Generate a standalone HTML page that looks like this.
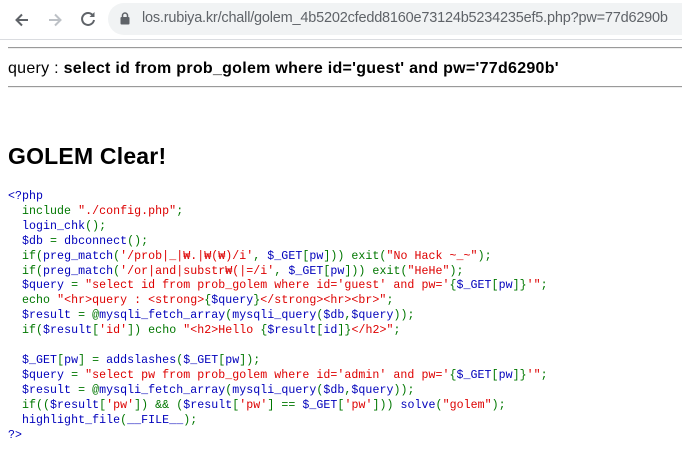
<!DOCTYPE html>
<html><head><meta charset="utf-8"><style>
*{margin:0;padding:0;box-sizing:border-box}
body{width:682px;height:457px;overflow:hidden;background:#fff;font-family:"Liberation Sans","Noto Sans CJK KR",sans-serif;position:relative}
.bar{position:absolute;left:0;top:0;width:682px;height:40px;background:#fff;border-bottom:1px solid #dadce0}
.pill{position:absolute;left:108px;top:3px;width:590px;height:32px;border-radius:16px;background:#f1f3f4}
.url{position:absolute;left:142px;top:10px;font-size:14.5px;color:#5f6368;letter-spacing:-0.2px;white-space:nowrap}
.hr{position:absolute;left:8px;width:674px;height:2px;border-top:1px solid #9a9a9a;border-bottom:1px solid #eee}
.q{position:absolute;left:8px;top:60px;font-size:16px;color:#000;white-space:nowrap;letter-spacing:0.28px}
h2{position:absolute;left:8px;top:143px;font-size:23px;font-weight:bold;letter-spacing:0.2px}
pre{position:absolute;left:8px;top:190px;font-family:"Liberation Mono","Noto Sans CJK KR",monospace;font-size:11.6px;line-height:14.9px;letter-spacing:0.05px;color:#0000BB}
.g{color:#007700}.r{color:#DD0000}
</style></head><body>
<div class="bar">
<svg style="position:absolute;left:12px;top:10px" width="20" height="20" viewBox="0 0 20 20"><path d="M16 10H5M10 4.5L4.5 10 10 15.5" stroke="#5f6368" stroke-width="2" fill="none"/></svg>
<svg style="position:absolute;left:45px;top:10px" width="20" height="20" viewBox="0 0 20 20"><path d="M4 10h11M10 4.5l5.5 5.5L10 15.5" stroke="#bdc1c6" stroke-width="2" fill="none"/></svg>
<svg style="position:absolute;left:78px;top:9px" width="20" height="20" viewBox="0 0 20 20"><path d="M15 6.5A6 6 0 1 0 16 11" stroke="#5f6368" stroke-width="2" fill="none"/><path d="M16.5 3v5h-5z" fill="#5f6368"/></svg>
<div class="pill"></div>
<svg style="position:absolute;left:120px;top:12px" width="10" height="13" viewBox="0 0 10 13"><rect x="0.5" y="5" width="9" height="7.5" rx="1" fill="#5f6368"/><path d="M2.5 5.5V3.5a2.5 2.5 0 0 1 5 0v2" stroke="#5f6368" stroke-width="1.5" fill="none"/></svg>
<div class="url">los.rubiya.kr/chall/golem_4b5202cfedd8160e73124b5234235ef5.php?pw=77d6290b</div>
</div>
<div class="hr" style="top:47px"></div>
<div class="q">query : <b>select id from prob_golem where id='guest' and pw='77d6290b'</b></div>
<div class="hr" style="top:86px"></div>
<h2>GOLEM Clear!</h2>
<pre>&lt;?php
<span class="g">  include </span><span class="r">"./config.php"</span><span class="g">;</span>
  login_chk<span class="g">();</span>
  $db <span class="g">= </span>dbconnect<span class="g">();</span>
<span class="g">  if(</span>preg_match<span class="g">(</span><span class="r">'/prob|_|₩.|₩(₩)/i'</span><span class="g">, </span>$_GET<span class="g">[</span>pw<span class="g">])) exit(</span><span class="r">"No Hack ~_~"</span><span class="g">);</span>
<span class="g">  if(</span>preg_match<span class="g">(</span><span class="r">'/or|and|substr₩(|=/i'</span><span class="g">, </span>$_GET<span class="g">[</span>pw<span class="g">])) exit(</span><span class="r">"HeHe"</span><span class="g">);</span>
  $query <span class="g">= </span><span class="r">"select id from prob_golem where id='guest' and pw='</span><span class="g">{</span>$_GET<span class="g">[</span>pw<span class="g">]}</span><span class="r">'"</span><span class="g">;</span>
<span class="g">  echo </span><span class="r">"&lt;hr&gt;query : &lt;strong&gt;</span><span class="g">{</span>$query<span class="g">}</span><span class="r">&lt;/strong&gt;&lt;hr&gt;&lt;br&gt;"</span><span class="g">;</span>
  $result <span class="g">= @</span>mysqli_fetch_array<span class="g">(</span>mysqli_query<span class="g">(</span>$db<span class="g">,</span>$query<span class="g">));</span>
<span class="g">  if(</span>$result<span class="g">[</span><span class="r">'id'</span><span class="g">]) echo </span><span class="r">"&lt;h2&gt;Hello </span><span class="g">{</span>$result<span class="g">[</span>id<span class="g">]}</span><span class="r">&lt;/h2&gt;"</span><span class="g">;</span>

  $_GET<span class="g">[</span>pw<span class="g">] = </span>addslashes<span class="g">(</span>$_GET<span class="g">[</span>pw<span class="g">]);</span>
  $query <span class="g">= </span><span class="r">"select pw from prob_golem where id='admin' and pw='</span><span class="g">{</span>$_GET<span class="g">[</span>pw<span class="g">]}</span><span class="r">'"</span><span class="g">;</span>
  $result <span class="g">= @</span>mysqli_fetch_array<span class="g">(</span>mysqli_query<span class="g">(</span>$db<span class="g">,</span>$query<span class="g">));</span>
<span class="g">  if((</span>$result<span class="g">[</span><span class="r">'pw'</span><span class="g">]) &amp;&amp; (</span>$result<span class="g">[</span><span class="r">'pw'</span><span class="g">] == </span>$_GET<span class="g">[</span><span class="r">'pw'</span><span class="g">])) </span>solve<span class="g">(</span><span class="r">"golem"</span><span class="g">);</span>
  highlight_file<span class="g">(</span>__FILE__<span class="g">);</span>
?&gt;</pre>
</body></html>
